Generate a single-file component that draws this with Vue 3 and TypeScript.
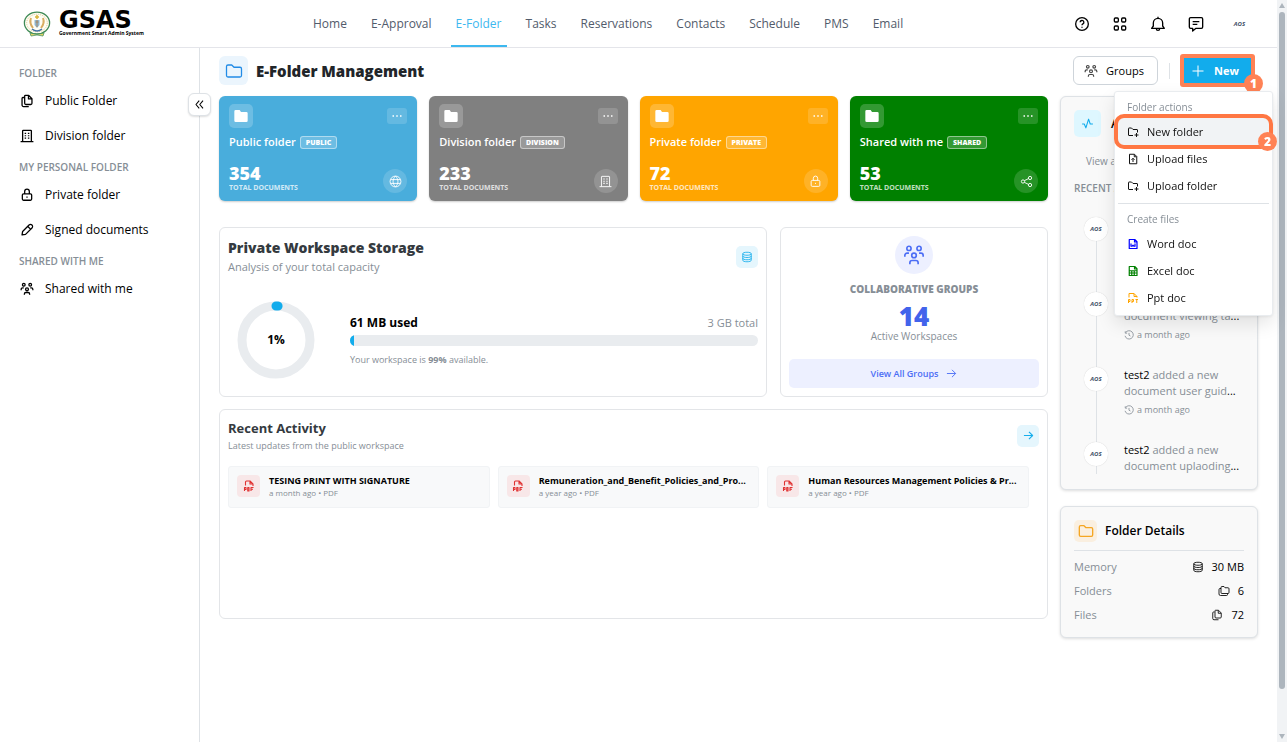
<script setup lang="ts">
import { h } from 'vue'

type Shape = { d: string; fill?: boolean }

const shapes: Record<string, Shape[]> = {
  files: [{ d: 'M9 2.500h6l5.500 5.500v8a2 2 0 0 1-2 2H10a2 2 0 0 1-2-2V3.500a1 1 0 0 1 1-1z M14.500 3v5.500h5.500 M7 6H5a1.500 1.500 0 0 0-1.500 1.500V19a2.500 2.500 0 0 0 2.500 2.500h9' }],
  building: [{ d: 'M4.500 21V3.500a1 1 0 0 1 1-1h13a1 1 0 0 1 1 1V21 M1 21.500h22' }, { d: 'M8 6.500h2.500v2H8z M13.500 6.500H16v2h-2.500z M8 10.500h2.500v2H8z M13.500 10.500H16v2h-2.500z M8 14.500h2.500v2H8z M13.500 14.500H16v2h-2.500z', fill: true }],
  lock: [{ d: 'M6 10h12a2 2 0 0 1 2 2v7a2 2 0 0 1-2 2H6a2 2 0 0 1-2-2v-7a2 2 0 0 1 2-2z M8 10V6a4 4 0 0 1 8 0v4 M12 14.500v2' }],
  pencil: [{ d: 'M3.500 20.500l1-6L15.500 3.500a3.500 3.500 0 0 1 5 5L9.500 19.500z M13.500 6l4.500 4.500' }],
  group: [{ d: 'M6.500 2.500a2.300 2.300 0 1 1 0 4.600a2.300 2.300 0 0 1 0-4.600z M17.500 2.500a2.300 2.300 0 1 1 0 4.600a2.300 2.300 0 0 1 0-4.600z M12 10a2.500 2.500 0 1 1 0 5a2.500 2.500 0 0 1 0-5z M2 14v-1.500a2.500 2.500 0 0 1 2.500-2.500h2 M22 14v-1.500a2.500 2.500 0 0 0-2.500-2.500h-2 M7.500 22v-1.500a2.500 2.500 0 0 1 2.500-2.500h4a2.500 2.500 0 0 1 2.500 2.500V22' }],
  help: [{ d: 'M12 2.500a9.500 9.500 0 1 1 0 19a9.500 9.500 0 0 1 0-19z M9.200 9.500a2.800 2.800 0 1 1 4.200 2.400q-1.400.8-1.400 2 M12 16v1.500' }],
  apps: [{ d: 'M5 3h3a1.500 1.500 0 0 1 1.500 1.500v3A1.500 1.500 0 0 1 8 9H5a1.500 1.500 0 0 1-1.500-1.500v-3A1.500 1.500 0 0 1 5 3z M16 3h3a1.500 1.500 0 0 1 1.500 1.500v3A1.500 1.500 0 0 1 19 9h-3a1.500 1.500 0 0 1-1.500-1.500v-3A1.500 1.500 0 0 1 16 3z M5 15h3a1.500 1.500 0 0 1 1.500 1.500v3A1.500 1.500 0 0 1 8 21H5a1.500 1.500 0 0 1-1.500-1.500v-3A1.500 1.500 0 0 1 5 15z M16 15h3a1.500 1.500 0 0 1 1.500 1.500v3A1.500 1.500 0 0 1 19 21h-3a1.500 1.500 0 0 1-1.500-1.500v-3A1.500 1.500 0 0 1 16 15z' }],
  bell: [{ d: 'M12 1v3 M2.500 18.500h19l-2.500-3.500v-4.500a7 7 0 0 0-14 0V15z M9.500 19a2.500 2.500 0 0 0 5 0' }],
  message: [{ d: 'M4 2.500h16a2 2 0 0 1 2 2v12a2 2 0 0 1-2 2h-8l-5 4v-4H4a2 2 0 0 1-2-2v-12a2 2 0 0 1 2-2z M7 8.500h10 M7 12.500h7' }],
  folder: [{ d: 'M4 4h5l3 3h8a2 2 0 0 1 2 2v9a2 2 0 0 1-2 2H4a2 2 0 0 1-2-2V6a2 2 0 0 1 2-2z' }],
  folderSolid: [{ d: 'M4 3h6l2 3h8a2 2 0 0 1 2 2v11a2 2 0 0 1-2 2H4a2 2 0 0 1-2-2V5a2 2 0 0 1 2-2z', fill: true }],
  folders: [{ d: 'M8 3h4l2 2.500h6a2 2 0 0 1 2 2V15a2 2 0 0 1-2 2H8a2 2 0 0 1-2-2V5a2 2 0 0 1 2-2z M6 7H4a2 2 0 0 0-2 2v9a3 3 0 0 0 3 3h12a2 2 0 0 0 2-2v-2' }],
  folderPlus: [{ d: 'M12 19H4a1 1 0 0 1-1-1V5a1 1 0 0 1 1-1h5l3 3h8a1 1 0 0 1 1 1v5 M19 14v8 M15 18h8' }],
  fileUp: [{ d: 'M5 2.500h10l4.500 4.500v14.500H5z M14.500 3v4.500H19 M12 18v-7 M9 13.500l3-3l3 3' }],
  word: [{ d: 'M4.500 3h11L20 7.500V21H4.500z M15 3v5h5 M8 11v5.500h2l2-2l2 2h2V11' }],
  excel: [{ d: 'M4.500 3h11L20 7.500V21H4.500z M15 3v5h5 M5 11.500h15 M5 16h15 M9.500 11v10 M14.500 11v10' }],
  ppt: [{ d: 'M4 11V3h10l6 6v2 M14 3v6h6 M3 22v-7h3v4H3 M10 22v-7h3v4h-3 M17 15h5 M19.500 15v7' }],
  pdf: [{ d: 'M5 11V4a2 2 0 0 1 2-2h7l6 6v4 M14 2v6h6 M3 22v-7h3v4H3 M9.500 15v7H12v-7z M16 22v-7h5 M16 18.500h4' }],
  db: [{ d: 'M12 2.500c5 0 8.500 1.200 8.500 3S17 8.500 12 8.500S3.500 7.300 3.500 5.500s3.500-3 8.500-3z M3.500 5.500v13c0 1.800 3.500 3 8.500 3s8.500-1.200 8.500-3v-13 M3.500 10c0 1.800 3.500 3 8.500 3s8.500-1.200 8.500-3 M3.500 14.500c0 1.800 3.500 3 8.500 3s8.500-1.200 8.500-3' }],
  globe: [{ d: 'M12 2a10 10 0 1 1 0 20a10 10 0 0 1 0-20z M12 2c-6 6-6 14 0 20 M12 2c6 6 6 14 0 20 M3 8.500h18 M3 15.500h18' }],
  share: [{ d: 'M18.500 2.500a3 3 0 1 1 0 6a3 3 0 0 1 0-6z M18.500 15.500a3 3 0 1 1 0 6a3 3 0 0 1 0-6z M5.500 9a3 3 0 1 1 0 6a3 3 0 0 1 0-6z M8 10.500l8-4 M8 13.500l8 4' }],
  arrow: [{ d: 'M2 12h19 M13 4l8 8l-8 8' }],
  activity: [{ d: 'M2 13h4l3 7l5-16l3 9h5' }],
  chevrons: [{ d: 'M11.500 5l-6 7l6 7 M18.500 5l-6 7l6 7' }],
  plus: [{ d: 'M12 1v22 M1 12h22' }],
  history: [{ d: 'M4 6a10 10 0 1 1-1.500 8 M3 3v4.500h4.500 M12 7v5.500l3.500 2' }],
  dots: [{ d: 'M3 10.500h3v3H3z M10.500 10.500h3v3h-3z M18 10.500h3v3h-3z', fill: true }],
}

const Icon = (props: { name: string; size?: number; weight?: number }) =>
  h(
    'svg',
    {
      viewBox: '0 0 24 24',
      width: props.size ?? 16,
      height: props.size ?? 16,
      'aria-hidden': 'true',
      fill: 'none',
      stroke: 'currentColor',
      'stroke-width': props.weight ?? 2,
      'stroke-linejoin': 'round',
    },
    shapes[props.name].map((s) => h('path', { d: s.d, fill: s.fill ? 'currentColor' : 'none', stroke: s.fill ? 'none' : 'currentColor' })),
  )
Icon.props = ['name', 'size', 'weight']

const nav = ['Home', 'E-Approval', 'E-Folder', 'Tasks', 'Reservations', 'Contacts', 'Schedule', 'PMS', 'Email']
const tools = [
  { icon: 'help', label: 'Help' },
  { icon: 'apps', label: 'Apps' },
  { icon: 'bell', label: 'Notifications' },
  { icon: 'message', label: 'Messages' },
]
const sections = [
  { title: 'FOLDER', items: [{ icon: 'files', label: 'Public Folder' }, { icon: 'building', label: 'Division folder' }] },
  { title: 'MY PERSONAL FOLDER', items: [{ icon: 'lock', label: 'Private folder' }, { icon: 'pencil', label: 'Signed documents' }] },
  { title: 'SHARED WITH ME', items: [{ icon: 'group', label: 'Shared with me' }] },
]
const cards = [
  { tone: 'blue', title: 'Public folder', tag: 'PUBLIC', count: 354, icon: 'globe' },
  { tone: 'gray', title: 'Division folder', tag: 'DIVISION', count: 233, icon: 'building' },
  { tone: 'orange', title: 'Private folder', tag: 'PRIVATE', count: 72, icon: 'lock' },
  { tone: 'green', title: 'Shared with me', tag: 'SHARED', count: 53, icon: 'share' },
]
const recent = [
  { name: 'TESING PRINT WITH SIGNATURE', meta: 'a month ago • PDF' },
  { name: 'Remuneration_and_Benefit_Policies_and_Pro...', meta: 'a year ago • PDF' },
  { name: 'Human Resources Management Policies & Pr...', meta: 'a year ago • PDF' },
]
const feed = ['user guide', 'viewing ta', 'user guid', 'uplaoding']
const details = [
  { label: 'Memory', icon: 'db', value: '30 MB' },
  { label: 'Folders', icon: 'folders', value: '6' },
  { label: 'Files', icon: 'files', value: '72' },
]
const usedPercent = 1
</script>

<template>
  <div class="app">
    <header class="topbar">
      <a class="brand" href="#" aria-label="GSAS home">
        <svg class="seal" viewBox="0 0 28 26" width="28" height="26" aria-hidden="true">
          <ellipse cx="14" cy="12" rx="12.600" ry="10.800" fill="#fffdf4" stroke="#3f8a55" stroke-width="1.300" />
          <ellipse cx="14" cy="12" rx="10.300" ry="8.800" fill="none" stroke="#d9c98c" stroke-width="1" stroke-dasharray="1 1" />
          <path d="M8 7q-2 5 2 10M20 7q2 5-2 10" fill="none" stroke="#d9ad62" stroke-width="2" />
          <path d="M14 4v4M12 6h4" stroke="#d8b53a" stroke-width="1.500" />
          <path d="M11.500 9h5v5l-2.500 3l-2.500-3z" fill="#8fb9d6" />
          <path d="M12.500 11h3M14 9v7" stroke="#a5845e" />
          <path d="M9 18q5 4 10 0" fill="none" stroke="#4473a5" stroke-width="1.500" />
          <path d="M7 22q7 3 14 0l-1 3q-6-2-12 0z" fill="#e8d560" stroke="#4b945d" stroke-width=".8" />
        </svg>
        <span class="wordmark">
          <span class="name">GSAS</span>
          <span class="tagline">Government Smart Admin System</span>
        </span>
      </a>
      <nav class="nav" aria-label="Main">
        <a v-for="item in nav" :key="item" href="#" :class="{ active: item === 'E-Folder' }">{{ item }}</a>
      </nav>
      <div class="tools">
        <button v-for="t in tools" :key="t.icon" type="button" :aria-label="t.label"><Icon :name="t.icon" :size="16" :weight="2" /></button>
        <button type="button" class="account" aria-label="Account"><i class="aos">AOS</i></button>
      </div>
    </header>

    <div class="body">
      <aside class="sidebar">
        <section v-for="s in sections" :key="s.title">
          <h2>{{ s.title }}</h2>
          <a v-for="i in s.items" :key="i.label" href="#"><Icon :name="i.icon" :size="14" :weight="2.200" />{{ i.label }}</a>
        </section>
        <button class="collapse" type="button" aria-label="Collapse sidebar"><Icon name="chevrons" :size="13" :weight="2" /></button>
      </aside>

      <main class="content">
        <div class="heading">
          <span class="title-icon"><Icon name="folder" :size="18" :weight="1.700" /></span>
          <h1>E-Folder Management</h1>
          <button class="groups-btn" type="button"><Icon name="group" :size="14" />Groups</button>
          <span class="sep"></span>
          <div class="new-wrap">
            <div class="new-frame">
              <button class="new-btn" type="button" aria-expanded="true"><Icon name="plus" :size="12" />New</button>
              <span class="step">1</span>
            </div>
            <div class="menu" role="menu">
              <p>Folder actions</p>
              <div class="picked">
                <button type="button" role="menuitem"><Icon name="folderPlus" :size="12" />New folder</button>
                <span class="ring"></span>
                <span class="step">2</span>
              </div>
              <button type="button" role="menuitem"><Icon name="fileUp" :size="12" />Upload files</button>
              <button type="button" role="menuitem"><Icon name="folderPlus" :size="12" />Upload folder</button>
              <hr />
              <p>Create files</p>
              <button type="button" role="menuitem"><Icon class="word" name="word" :size="12" :weight="2.400" />Word doc</button>
              <button type="button" role="menuitem"><Icon class="excel" name="excel" :size="12" :weight="2.400" />Excel doc</button>
              <button type="button" role="menuitem"><Icon class="ppt" name="ppt" :size="12" />Ppt doc</button>
            </div>
          </div>
        </div>

        <div class="columns">
          <div class="primary">
            <div class="cards">
              <article v-for="c in cards" :key="c.tag" class="card" :class="c.tone">
                <div class="card-top">
                  <span class="tile"><Icon name="folderSolid" :size="16" /></span>
                  <button type="button" :aria-label="c.title + ' options'"><Icon name="dots" :size="12" /></button>
                </div>
                <h2>{{ c.title }}<span>{{ c.tag }}</span></h2>
                <div class="card-bottom">
                  <div>
                    <strong>{{ c.count }}</strong>
                    <small>TOTAL DOCUMENTS</small>
                  </div>
                  <span class="disc"><Icon :name="c.icon" :size="13" :weight="1.700" /></span>
                </div>
              </article>
            </div>

            <div class="row">
              <section class="panel storage">
                <div class="panel-head">
                  <div>
                    <h2>Private Workspace Storage</h2>
                    <p>Analysis of your total capacity</p>
                  </div>
                  <span class="chip"><Icon name="db" :size="12" :weight="1.700" /></span>
                </div>
                <div class="usage">
                  <div class="donut">
                    <svg viewBox="0 0 78 78" width="78" height="78" aria-hidden="true">
                      <circle cx="39" cy="39" r="34" fill="none" stroke="#e9ecef" stroke-width="9" />
                      <circle cx="39" cy="39" r="34" fill="none" stroke="#12acec" stroke-width="9" stroke-linecap="round" pathLength="100" :stroke-dasharray="usedPercent + ' 100'" transform="rotate(-90 39 39)" />
                    </svg>
                    <b>{{ usedPercent }}%</b>
                  </div>
                  <div class="meter">
                    <div class="meter-head"><b>61 MB used</b><span>3 GB total</span></div>
                    <div class="track"><div :style="{ width: usedPercent + '%' }"></div></div>
                    <p>Your workspace is <b>{{ 100 - usedPercent }}%</b> available.</p>
                  </div>
                </div>
              </section>

              <section class="panel collab">
                <span class="badge"><Icon name="group" :size="22" :weight="1.800" /></span>
                <h2>COLLABORATIVE GROUPS</h2>
                <strong>14</strong>
                <p>Active Workspaces</p>
                <button type="button">View All Groups<Icon name="arrow" :size="11" /></button>
              </section>
            </div>

            <section class="panel recent">
              <div class="panel-head">
                <div>
                  <h2>Recent Activity</h2>
                  <p>Latest updates from the public workspace</p>
                </div>
                <button class="chip" type="button" aria-label="Open recent activity"><Icon name="arrow" :size="11" :weight="2.400" /></button>
              </div>
              <div class="files">
                <a v-for="f in recent" :key="f.name" class="file" href="#">
                  <span class="pdf"><Icon name="pdf" :size="12" :weight="2.200" /></span>
                  <span class="file-text"><b>{{ f.name }}</b><small>{{ f.meta }}</small></span>
                </a>
              </div>
            </section>
          </div>

          <div class="secondary">
            <section class="side activities">
              <h2><span class="pulse"><Icon name="activity" :size="13" /></span>Activities</h2>
              <a class="view" href="#">View all</a>
              <h3>RECENT ACTIVITY</h3>
              <ol>
                <li v-for="(f, i) in feed" :key="i">
                  <span class="avatar"><i class="aos">AOS</i></span>
                  <div>
                    <p><b>test2</b> added a new<br />document <em>{{ f }}</em><b>...</b></p>
                    <time v-if="i < feed.length - 1"><Icon name="history" :size="10" />a month ago</time>
                  </div>
                </li>
              </ol>
            </section>

            <section class="side details">
              <h2><span class="pulse amber"><Icon name="folder" :size="16" /></span>Folder Details</h2>
              <dl>
                <div v-for="d in details" :key="d.label">
                  <dt>{{ d.label }}</dt>
                  <dd><Icon :name="d.icon" :size="12" :weight="1.700" />{{ d.value }}</dd>
                </div>
              </dl>
            </section>
          </div>
        </div>
      </main>
    </div>
    <div class="scrollbar" aria-hidden="true"><i class="up"></i><span></span><i class="down"></i></div>
  </div>
</template>

<style>
html { background: #fff; }
body { margin: 0; }
</style>

<style scoped>
* { box-sizing: border-box; }
.app {
  min-height: 100vh;
  padding-right: 10px;
  display: flex;
  flex-direction: column;
  background: #fff;
  color: #000;
  font-family: "Open Sans", "Noto Sans", sans-serif;
  font-size: 12px;
  line-height: 16px;
}
h1, h2, h3, p, dl, dd, ol { margin: 0; padding: 0; }
ol { list-style: none; }
a { color: inherit; text-decoration: none; }
button { font: inherit; color: inherit; border: 0; background: none; padding: 0; display: flex; align-items: center; justify-content: center; }
svg { flex: none; display: block; }

.topbar { height: 48px; display: grid; grid-template-columns: 300px 1fr 230px; border-bottom: 1px solid #e4e5ea; }
.brand { display: flex; align-items: center; gap: 8px; padding-left: 23px; }
.wordmark { display: flex; flex-direction: column; }
.name { font: bold 24px/19px "DejaVu Sans", sans-serif; }
.tagline { font-size: 5px; line-height: 6px; font-weight: 700; white-space: nowrap; }
.nav { display: flex; color: #525b6b; font-weight: 500; padding-left: 8px; }
.nav a { display: flex; align-items: center; padding: 2px 5px 0; margin-right: 14px; border-bottom: 2px solid transparent; white-space: nowrap; }
.nav a.active { color: #3db8ef; border-color: #3db8ef; }
.tools { display: flex; align-items: center; justify-content: flex-end; gap: 22px; padding-right: 28px; }
.account { width: 19px; margin-left: 4px; }
.aos { font: italic bold 6px/8px "Open Sans", sans-serif; color: #435168; }

.body { flex: 1; display: flex; }
.sidebar { position: relative; width: 200px; flex: none; padding: 11px 19px; border-right: 1px solid #dee2e6; }
.sidebar section { padding-top: 5px; }
.sidebar h2 { font-size: 10px; line-height: 19px; font-weight: 600; color: #868e96; }
.sidebar section a { display: flex; align-items: center; gap: 11px; height: 35px; padding-left: 1px; font-weight: 500; }
.collapse { position: absolute; right: -12px; top: 45px; width: 23px; height: 23px; background: #fff; border: 1px solid #dee2e6; border-radius: 6px; box-shadow: 0 1px 2px #0002; }

.content { flex: 1; min-width: 0; padding: 8px 19px 20px; }
.heading { display: flex; align-items: center; height: 29px; margin-bottom: 11px; }
.title-icon { width: 29px; height: 29px; border-radius: 6px; background: #ebf5fd; color: #228be6; display: grid; place-items: center; }
h1 { font-size: 15px; line-height: 18px; font-weight: 800; margin-left: 8px; color: #212529; }
.groups-btn { margin-left: auto; width: 85px; height: 29px; padding-right: 3px; gap: 8px; border: 1px solid #ced4da; border-radius: 6px; font-size: 11px; font-weight: 500; }
.groups-btn svg { color: #444; }
.sep { width: 1px; height: 16px; background: #dee2e6; margin: 0 10px 0 11px; }
.new-wrap { position: relative; margin-right: 3px; }
.new-frame { position: relative; background: #ff8255; padding: 4px; border-radius: 3px; }
.new-btn { width: 67px; height: 25px; gap: 10px; padding-right: 4px; background: #12acec; color: #fff; font-size: 11px; font-weight: 700; }
.step { position: absolute; z-index: 2; right: -8px; bottom: -6px; width: 19px; height: 19px; border-radius: 50%; background: #ff8255; color: #fff; font-weight: 800; line-height: 19px; text-align: center; }
.menu { position: absolute; z-index: 5; right: -18px; top: 37px; width: 159px; padding: 4px 3px; background: #fff; border: 1px solid #e9ecef; border-radius: 3px; box-shadow: 0 8px 18px #0000001a, 0 1px 3px #0001; }
.menu p { padding-left: 9px; font-size: 10px; line-height: 22px; color: #868e96; font-weight: 500; }
.menu button { width: 100%; height: 27px; justify-content: flex-start; gap: 8px; padding-left: 9px; font-size: 11px; color: #111; }
.menu hr { border: 0; height: 1px; margin: 4px 0; background: #dee2e6; }
.picked { position: relative; }
.picked button { background: #f1f3f5; }
.ring { position: absolute; inset: -4px; border: 4px solid #ff7743; border-radius: 10px; pointer-events: none; }
.word { color: #00f; }
.excel { color: green; }
.ppt { color: orange; }

.columns { display: grid; grid-template-columns: minmax(0, 1fr) 198px; gap: 12px; align-items: start; }
.primary { display: flex; flex-direction: column; gap: 12px; }
.cards { display: grid; grid-template-columns: repeat(4, 1fr); gap: 12px; margin-bottom: 14px; }
.card { height: 105px; padding: 8px 10px; border-radius: 6px; color: #fff; box-shadow: 0 1px 2px #0003; display: flex; flex-direction: column; }
.blue { background: #49addc; }
.gray { background: gray; }
.orange { background: orange; }
.green { background: green; }
.card-top, .card-bottom, .panel-head { display: flex; justify-content: space-between; align-items: center; }
.tile { width: 24px; height: 24px; border-radius: 5px; background: #fff3; display: grid; place-items: center; }
.card-top button { width: 20px; height: 16px; border-radius: 3px; background: #ffffff26; }
.card h2 { display: flex; align-items: center; gap: 4px; margin-top: 6px; font-size: 11px; line-height: 16px; font-weight: 600; white-space: nowrap; }
.card h2 span { padding: 0 5px; border: 1px solid #ffffff73; border-radius: 3px; background: #fff3; font-size: 7px; line-height: 11px; font-weight: 800; }
.card-bottom { margin-top: auto; align-items: flex-end; }
.card strong { display: block; font-size: 18px; line-height: 20px; font-weight: 800; }
.card small { display: block; font-size: 7px; line-height: 10px; font-weight: 700; opacity: .75; }
.disc { width: 24px; height: 24px; border-radius: 50%; background: #ffffff26; display: grid; place-items: center; }

.row { display: grid; grid-template-columns: minmax(0, 548fr) minmax(0, 268fr); gap: 13px; }
.panel { border: 1px solid #e3e5e8; border-radius: 6px; padding: 8px; background: #fff; }
.panel h2 { font-size: 14px; line-height: 20px; font-weight: 800; color: #343a40; }
.panel-head p { font-size: 11px; line-height: 18px; color: #868e96; }
.chip { width: 22px; height: 22px; border-radius: 5px; background: #e5f6fd; color: #15aeec; display: grid; place-items: center; }
.storage { height: 170px; padding-top: 10px; }
.usage { display: flex; align-items: center; padding: 25px 0 0 9px; }
.donut { position: relative; width: 78px; height: 78px; flex: none; display: grid; place-items: center; }
.donut b { position: absolute; font-size: 12px; }
.meter { flex: 1; margin-left: 35px; padding-top: 2px; }
.meter-head { display: flex; justify-content: space-between; line-height: 18px; }
.meter-head span { font-size: 11px; color: #868e96; }
.track { height: 11px; margin: 3px 0 6px; border-radius: 6px; background: #e9ecef; overflow: hidden; }
.track div { height: 100%; background: #12acec; }
.meter p { font-size: 9px; line-height: 16px; color: #868e96; }
.collab { display: flex; flex-direction: column; align-items: center; }
.badge { width: 38px; height: 38px; border-radius: 50%; background: #edf0ff; color: #4c6ef5; display: grid; place-items: center; }
.panel.collab h2 { margin-top: 7px; font-size: 10px; line-height: 16px; font-weight: 800; color: #868e96; }
.collab strong { font-size: 26px; line-height: 30px; margin-top: 4px; color: #4263eb; font-weight: 800; }
.collab p { font-size: 10px; line-height: 14px; margin-top: -2px; color: #868e96; }
.collab button { width: 100%; height: 29px; margin-top: auto; gap: 8px; border-radius: 5px; background: #edf0ff; color: #4c6ef5; font-size: 9px; font-weight: 600; }
.recent { height: 210px; }
.panel.recent h2 { font-size: 13px; font-weight: 700; }
.recent .panel-head p { font-size: 9px; line-height: 15px; }
.files { display: grid; grid-template-columns: repeat(3, minmax(0, 1fr)); gap: 8px; margin: 13px 10px 0 0; }
.file { display: flex; align-items: center; gap: 9px; height: 42px; padding: 0 8px 2px; background: #f8f9fa; border: 1px solid #f1f3f5; border-radius: 3px; }
.pdf { width: 23px; height: 22px; flex: none; border-radius: 4px; background: #f8e7e8; color: #e03131; display: grid; place-items: center; }
.file-text { min-width: 0; }
.file b { display: block; font-size: 9px; line-height: 12px; font-weight: 700; white-space: nowrap; }
.file small { display: block; font-size: 8px; line-height: 11px; color: #868e96; }

.secondary { display: flex; flex-direction: column; gap: 16px; }
.side { padding: 13px; background: #f9f9f9; border: 1px solid #dee2e6; border-radius: 6px; box-shadow: 0 1px 3px #0002; }
.side h2 { display: flex; align-items: center; gap: 10px; font-size: 12px; font-weight: 600; }
.pulse { width: 27px; height: 27px; border-radius: 5px; background: #def7ff; color: #12acec; display: grid; place-items: center; }
.activities { height: 394px; }
.view { display: block; margin: 16px 0 0 12px; font-size: 10px; color: #868e96; }
.activities h3 { margin-top: 11px; font-size: 10px; line-height: 16px; font-weight: 600; color: #868e96; }
.activities ol { margin-top: 20px; }
.activities li { position: relative; display: flex; gap: 16px; height: 75px; padding-left: 10px; }
.activities li::before { content: ""; position: absolute; left: 22px; top: 13px; width: 1px; height: 75px; background: #dee2e6; }
.activities li:last-child { height: 48px; }
.activities li:last-child::before { height: 20px; }
.avatar { position: relative; width: 24px; height: 24px; margin-top: 1px; display: grid; place-items: center; border-radius: 50%; background: #fff; box-shadow: 0 0 1px #0003; }
.activities li p { margin-top: 1px; font-size: 11px; line-height: 16px; color: #868e96; white-space: nowrap; }
.activities em { font-style: normal; font-weight: 500; }
.activities li b { font-weight: 500; color: #000; }
.activities time { display: flex; align-items: center; gap: 3px; margin-top: 4px; font-size: 9px; line-height: 14px; color: #868e96; }
.details h2 { padding-bottom: 8px; border-bottom: 1px solid #dee2e6; gap: 8px; line-height: 22px; }
.side.details { padding-bottom: 10px; }
.pulse.amber { width: 23px; height: 22px; background: #faefe0; color: #f5a623; }
.details dl { padding-top: 4px; }
.details dl div { display: flex; justify-content: space-between; font-size: 11px; line-height: 24px; }
.details dt { color: #868e96; }
.details dd { display: flex; align-items: center; gap: 8px; font-weight: 500; }

.scrollbar { position: fixed; right: 0; top: 0; bottom: 0; width: 10px; padding: 3px 2px; background: #f1f3f5; display: flex; flex-direction: column; align-items: center; }
.scrollbar span { width: 6px; height: 92%; margin: 4px 0 auto; border-radius: 3px; background: #adb5bd; }
.scrollbar i { border: 3px solid transparent; }
.up { border-top: 0 !important; border-bottom: 5px solid #adb5bd !important; }
.down { border-bottom: 0 !important; border-top: 5px solid #adb5bd !important; }
</style>
